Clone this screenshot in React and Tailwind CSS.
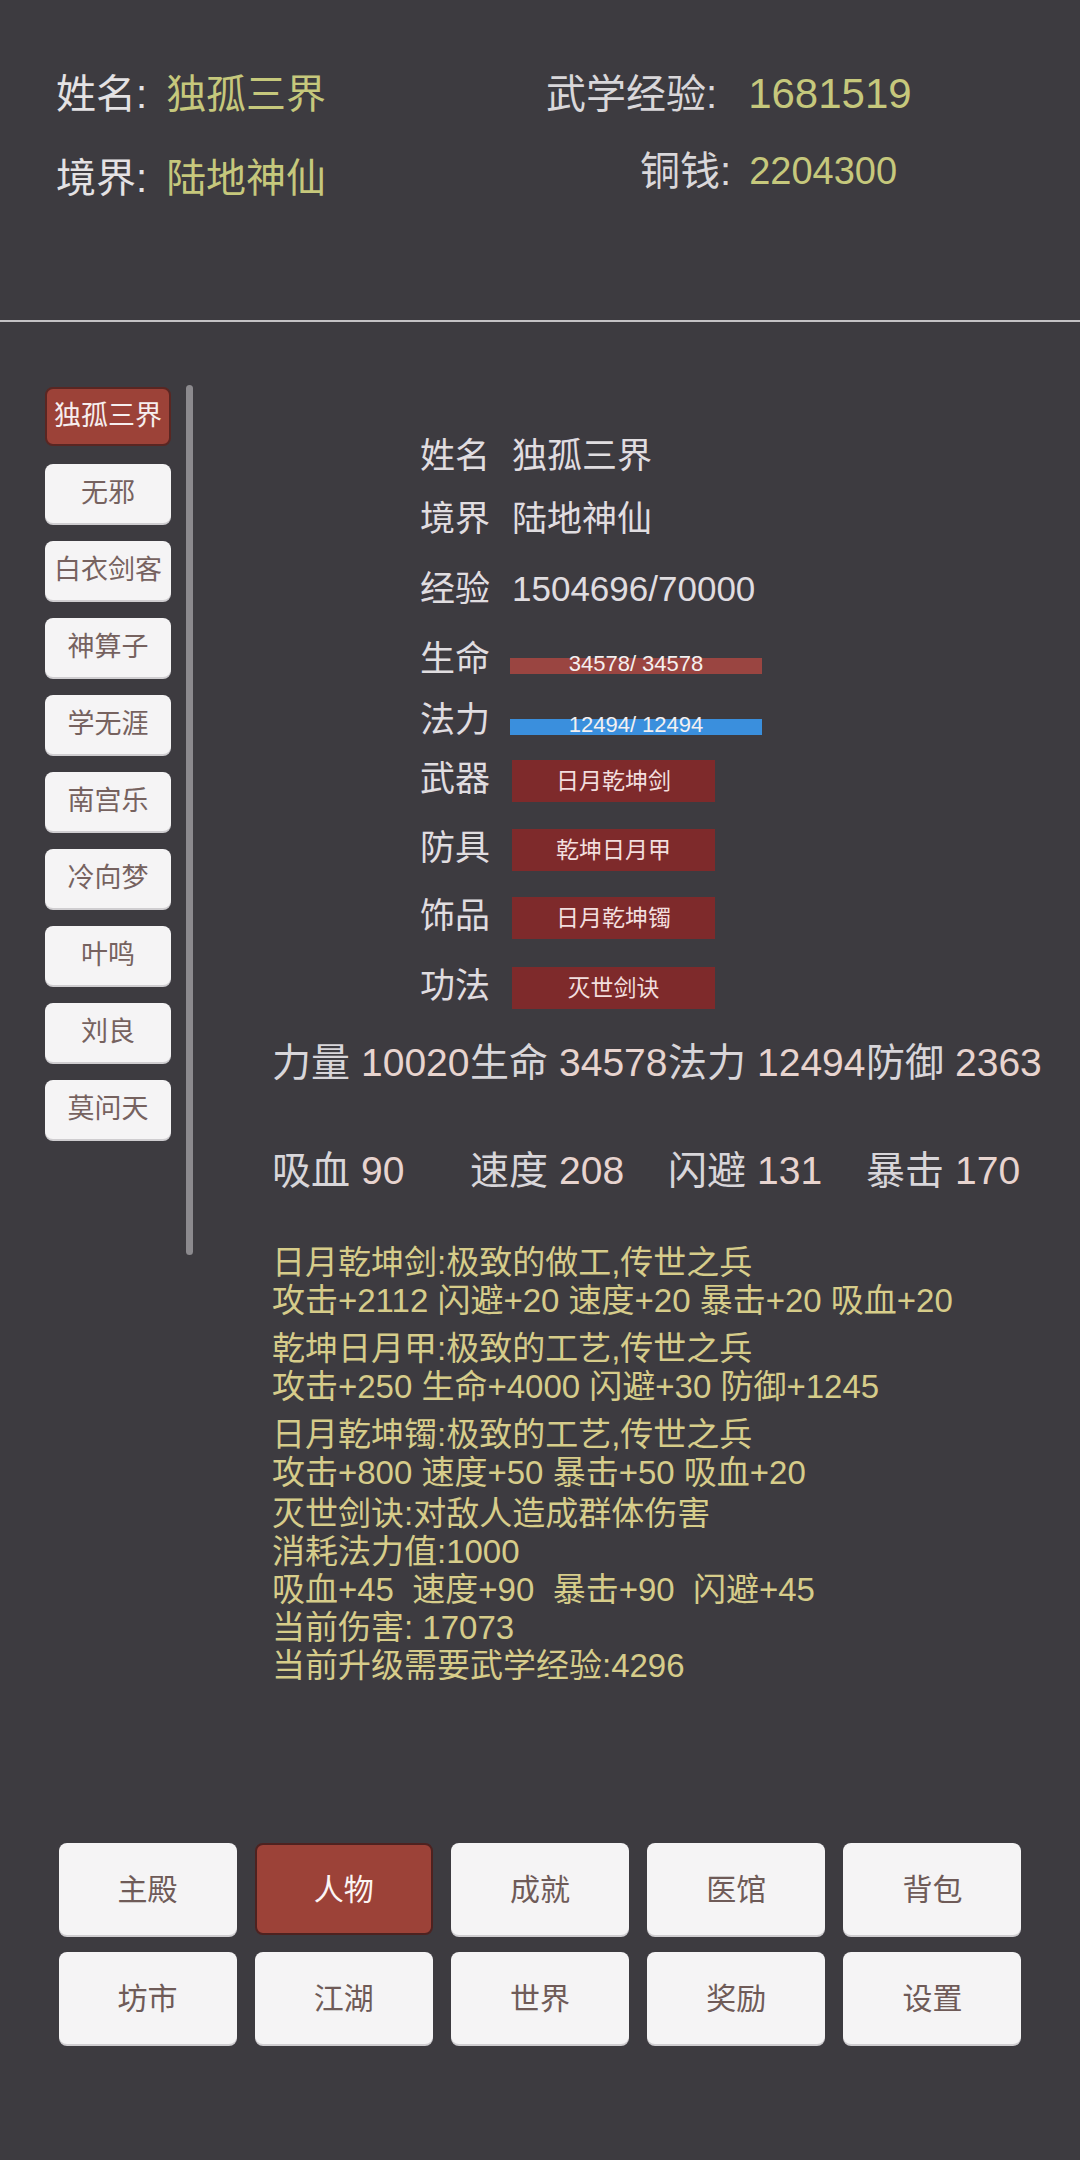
import React from "react";

const roster = ["独孤三界", "无邪", "白衣剑客", "神算子", "学无涯", "南宫乐", "冷向梦", "叶鸣", "刘良", "莫问天"];

const gear = [
  { label: "武器", name: "日月乾坤剑", row: "h-[60px]" },
  { label: "防具", name: "乾坤日月甲", row: "h-[78px]" },
  { label: "饰品", name: "日月乾坤镯", row: "h-[58px]" },
  { label: "功法", name: "灭世剑诀", row: "h-[82px]" },
];

const stats = [
  ["力量", "10020"],
  ["生命", "34578"],
  ["法力", "12494"],
  ["防御", "2363"],
  ["吸血", "90"],
  ["速度", "208"],
  ["闪避", "131"],
  ["暴击", "170"],
];

const itemNotes = [
  ["日月乾坤剑:极致的做工,传世之兵", "攻击+2112 闪避+20 速度+20 暴击+20 吸血+20"],
  ["乾坤日月甲:极致的工艺,传世之兵", "攻击+250 生命+4000 闪避+30 防御+1245"],
  ["日月乾坤镯:极致的工艺,传世之兵", "攻击+800 速度+50 暴击+50 吸血+20"],
  [
    "灭世剑诀:对敌人造成群体伤害",
    "消耗法力值:1000",
    "吸血+45  速度+90  暴击+90  闪避+45",
    "当前伤害: 17073",
    "当前升级需要武学经验:4296",
  ],
];

const navItems = ["主殿", "人物", "成就", "医馆", "背包", "坊市", "江湖", "世界", "奖励", "设置"];

// 生命/法力条
const Bar = ({ color, text }) => (
  <div className={`relative mt-[14px] h-[16px] w-[252px] ${color}`}>
    <span className="absolute inset-x-0 -top-[5px] text-center text-[22px] leading-[22px] text-[#f4f0f0]">
      {text}
    </span>
  </div>
);

export default function App() {
  return (
    <div className="min-h-[2160px] bg-[#3d3b40] font-['Liberation_Sans','Noto_Sans_CJK_SC',sans-serif]">
      {/* 顶部信息 */}
      <header className="flex h-[322px] border-b-2 border-[#c4c2c5] pt-[70px]">
        <div className="flex w-[546px] flex-col gap-[36px] pl-[56px] text-[40px] leading-[48px]">
          <div className="flex">
            <span className="text-[#e4e2e4]">姓名:</span>
            <span className="ml-[19px] text-[#c6c87c]">独孤三界</span>
          </div>
          <div className="flex">
            <span className="text-[#e4e2e4]">境界:</span>
            <span className="ml-[19px] text-[#c6c87c]">陆地神仙</span>
          </div>
        </div>
        <div className="flex flex-col gap-[29px] leading-[48px]">
          <div className="flex items-center">
            <span className="text-[40px] text-[#d9d7da]">武学经验:</span>
            <span className="ml-[31px] text-[42px] text-[#c6c87c]">1681519</span>
          </div>
          <div className="ml-[94px] flex items-center">
            <span className="text-[40px] text-[#d9d7da]">铜钱:</span>
            <span className="ml-[18px] text-[38px] text-[#c6c87c]">2204300</span>
          </div>
        </div>
      </header>

      <main className="flex h-[1521px]">
        {/* 角色列表 */}
        <div className="flex flex-col gap-[18px] pl-[45px] pt-[65px]">
          {roster.map((name, i) => (
            <button
              key={name}
              className={
                i === 0
                  ? "flex h-[59px] w-[126px] items-center justify-center rounded-[8px] border-2 border-[#5a2622] bg-[#9c4238] text-[27px] text-[#f6eeee]"
                  : "flex h-[59px] w-[126px] items-center justify-center rounded-[8px] bg-[#f5f4f5] text-[27px] text-[#76625f] shadow-[0_2px_0_#cfcdd0]"
              }
            >
              {name}
            </button>
          ))}
        </div>
        <div className="ml-[15px] mt-[63px] h-[870px] w-[7px] rounded-full bg-[#8c8a8e]" />

        {/* 角色详情 */}
        <div className="ml-[79px] flex flex-col pt-[103px]">
          <div className="ml-[148px] flex flex-col text-[35px] text-[#e0dde0]">
            <div className="flex h-[62px] items-center">
              <span className="w-[92px]">姓名</span>
              <span>独孤三界</span>
            </div>
            <div className="flex h-[64px] items-center">
              <span className="w-[92px]">境界</span>
              <span>陆地神仙</span>
            </div>
            <div className="flex h-[76px] items-center">
              <span className="w-[92px]">经验</span>
              <span>1504696/70000</span>
            </div>
            <div className="flex h-[64px] items-center">
              <span className="w-[90px]">生命</span>
              <Bar color="bg-[#9a4541]" text="34578/ 34578" />
            </div>
            <div className="flex h-[58px] items-center">
              <span className="w-[90px]">法力</span>
              <Bar color="bg-[#3a8fdd]" text="12494/ 12494" />
            </div>
            {gear.map((g) => (
              <div key={g.label} className={`flex items-center ${g.row}`}>
                <span className="w-[92px]">{g.label}</span>
                <div className="mt-[4px] flex h-[42px] w-[203px] items-center justify-center bg-[#7e2a2b] text-[23px] text-[#f2dede]">
                  {g.name}
                </div>
              </div>
            ))}
          </div>

          <div className="grid grid-cols-[repeat(4,198px)] gap-y-[36px] text-[39px]">
            {stats.map(([k, v]) => (
              <div key={k} className="flex h-[72px] items-center whitespace-nowrap">
                <span className="text-[#d8d6da]">{k}</span>
                <span className="ml-[11px] text-[#e8d4cf]">{v}</span>
              </div>
            ))}
          </div>

          <div className="mt-[37px] flex flex-col gap-[10px] text-[33px] leading-[38px] text-[#d6cc8a]">
            {itemNotes.map((block, i) => (
              <div key={i} className={i === 3 ? "-mt-[7px]" : ""}>
                {block.map((line) => (
                  <div key={line} className="whitespace-pre">
                    {line}
                  </div>
                ))}
              </div>
            ))}
          </div>
        </div>
      </main>

      {/* 底部导航 */}
      <nav className="mx-auto grid w-[963px] grid-cols-5 gap-x-[18px] gap-y-[17px]">
        {navItems.map((item) => (
          <button
            key={item}
            className={
              item === "人物"
                ? "flex h-[92px] items-center justify-center rounded-[8px] border-2 border-[#4e2220] bg-[#9c4238] text-[30px] text-[#fbf4f4]"
                : "flex h-[92px] items-center justify-center rounded-[8px] bg-[#f5f4f5] text-[30px] text-[#6f5b58] shadow-[0_2px_0_#cfcdd0]"
            }
          >
            {item}
          </button>
        ))}
      </nav>
    </div>
  );
}
